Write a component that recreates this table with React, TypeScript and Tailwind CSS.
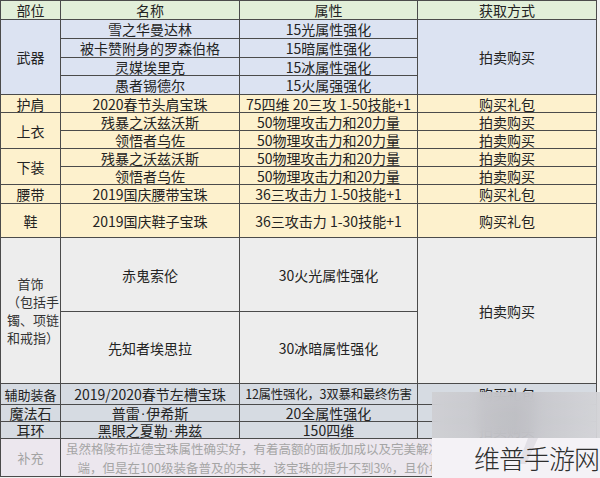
import React from 'react'

const FONT = { fontFamily: '"Noto Sans CJK SC", "Noto Sans", sans-serif' }

function Cell({
  bg,
  className = '',
  children,
}: {
  bg: string
  className?: string
  children?: React.ReactNode
}) {
  return (
    <div className={`${bg} ${className} flex items-center justify-center text-center leading-none overflow-hidden whitespace-nowrap`}>
      {children}
    </div>
  )
}

const Dot = () => <span className="font-['Liberation_Sans'] px-[1px]">·</span>

export default function App() {
  const head = 'bg-[#e2efd9]'
  const blue = 'bg-[#dce3f2]'
  const yellow = 'bg-[#fdf1cd]'
  const gray = 'bg-[#ededed]'
  const slate = 'bg-[#d6dbe2]'
  const pink = 'bg-[#ece7ee]'

  return (
    <div className="relative w-[600px] h-[478px] bg-[#f1f1f1] overflow-hidden text-[14px] text-[#232323]" style={FONT}>
      <div className="grid w-fit grid-cols-[59px_178px_177px_178px] grid-rows-[18px_18px_18px_17px_18px_17px_17px_17px_17px_17px_18px_33px_73px_71px_20px_16px_16px_37px] gap-px bg-[#4b4b4b] p-px">
        {/* header */}
        <Cell bg={head}>部位</Cell>
        <Cell bg={head}>名称</Cell>
        <Cell bg={head}>属性</Cell>
        <Cell bg={head}>获取方式</Cell>

        {/* 武器 */}
        <Cell bg={blue} className="row-span-4">武器</Cell>
        <Cell bg={blue}>雪之华曼达林</Cell>
        <Cell bg={blue}>15光属性强化</Cell>
        <Cell bg={blue} className="row-span-4">拍卖购买</Cell>
        <Cell bg={blue}>被卡赞附身的罗森伯格</Cell>
        <Cell bg={blue}>15暗属性强化</Cell>
        <Cell bg={blue}>灵媒埃里克</Cell>
        <Cell bg={blue}>15冰属性强化</Cell>
        <Cell bg={blue}>愚者锡德尔</Cell>
        <Cell bg={blue}>15火属强强化</Cell>

        {/* 护肩 ~ 鞋 */}
        <Cell bg={yellow}>护肩</Cell>
        <Cell bg={yellow}>2020春节头肩宝珠</Cell>
        <Cell bg={yellow}>75四维 20三攻 1-50技能+1</Cell>
        <Cell bg={yellow}>购买礼包</Cell>

        <Cell bg={yellow} className="row-span-2">上衣</Cell>
        <Cell bg={yellow}>残暴之沃兹沃斯</Cell>
        <Cell bg={yellow}>50物理攻击力和20力量</Cell>
        <Cell bg={yellow}>拍卖购买</Cell>
        <Cell bg={yellow}>领悟者乌佐</Cell>
        <Cell bg={yellow}>50物理攻击力和20力量</Cell>
        <Cell bg={yellow}>拍卖购买</Cell>

        <Cell bg={yellow} className="row-span-2">下装</Cell>
        <Cell bg={yellow}>残暴之沃兹沃斯</Cell>
        <Cell bg={yellow}>50物理攻击力和20力量</Cell>
        <Cell bg={yellow}>拍卖购买</Cell>
        <Cell bg={yellow}>领悟者乌佐</Cell>
        <Cell bg={yellow}>50物理攻击力和20力量</Cell>
        <Cell bg={yellow}>拍卖购买</Cell>

        <Cell bg={yellow}>腰带</Cell>
        <Cell bg={yellow}>2019国庆腰带宝珠</Cell>
        <Cell bg={yellow}>36三攻击力 1-50技能+1</Cell>
        <Cell bg={yellow}>购买礼包</Cell>

        <Cell bg={yellow}>鞋</Cell>
        <Cell bg={yellow}>2019国庆鞋子宝珠</Cell>
        <Cell bg={yellow}>36三攻击力 1-30技能+1</Cell>
        <Cell bg={yellow}>购买礼包</Cell>

        {/* 首饰 */}
        <div className={`${gray} row-span-2 flex flex-col justify-center text-[13px] leading-[18px] text-[#333] pl-[6px]`}>
          <span className="text-center pr-[6px]">首饰</span>
          <span>（包括手</span>
          <span>镯、项链</span>
          <span>和戒指）</span>
        </div>
        <Cell bg={gray}>赤鬼索伦</Cell>
        <Cell bg={gray}>30火光属性强化</Cell>
        <Cell bg={gray} className="row-span-2">拍卖购买</Cell>
        <Cell bg={gray}>先知者埃思拉</Cell>
        <Cell bg={gray}>30冰暗属性强化</Cell>

        {/* 辅助 / 魔法石 / 耳环 */}
        <Cell bg={slate} className="text-[13px]">辅助装备</Cell>
        <Cell bg={slate}>2019/2020春节左槽宝珠</Cell>
        <Cell bg={slate} className="text-[12.5px] tracking-[-0.3px]">12属性强化，3双暴和最终伤害</Cell>
        <Cell bg={slate}>购买礼包</Cell>
        <Cell bg={slate}>魔法石</Cell>
        <Cell bg={slate}>普雷<Dot />伊希斯</Cell>
        <Cell bg={slate}>20全属性强化</Cell>
        <Cell bg={slate}>拍卖购买</Cell>
        <Cell bg={slate}>耳环</Cell>
        <Cell bg={slate}>黑眼之夏勒<Dot />弗兹</Cell>
        <Cell bg={slate}>150四维</Cell>
        <Cell bg={slate}>拍卖购买</Cell>

        {/* 补充 */}
        <Cell bg={pink} className="text-[13px] text-[#a3a3a3]">补充</Cell>
        <div className={`${pink} col-span-3 flex flex-col items-center justify-center overflow-hidden whitespace-nowrap text-[12.5px] leading-[19px] text-[#a5a5a5]`}>
          <span>虽然格陵布拉德宝珠属性确实好，有着高额的面板加成以及完美解决了属性强化的问题，属于顶</span>
          <span>端，但是在100级装备普及的未来，该宝珠的提升不到3%，且价格过于昂贵，性价比不足。</span>
        </div>
      </div>

      {/* watermark */}
      <div className="absolute left-[432px] top-[392px] w-[168px] h-[46px] backdrop-blur-[6px] bg-gradient-to-r from-[#cfcfd3]/90 via-[#c3c3c8]/90 to-[#d4d4d8]/90" />
      <div className="absolute left-[432px] top-[438px] w-[168px] h-[40px] bg-[#f4f2f6] flex items-center">
        <svg className="absolute left-[86px] top-[0px]" width="20" height="26" viewBox="0 0 20 26">
          <polygon points="10,0 20,0 8,26 0,26" fill="#e2e0e6" />
        </svg>
        <span className="relative pl-[42px] text-[26px] leading-none text-[#2e2e2e] font-light whitespace-nowrap tracking-[-1px]">维普手游网</span>
      </div>
    </div>
  )
}
